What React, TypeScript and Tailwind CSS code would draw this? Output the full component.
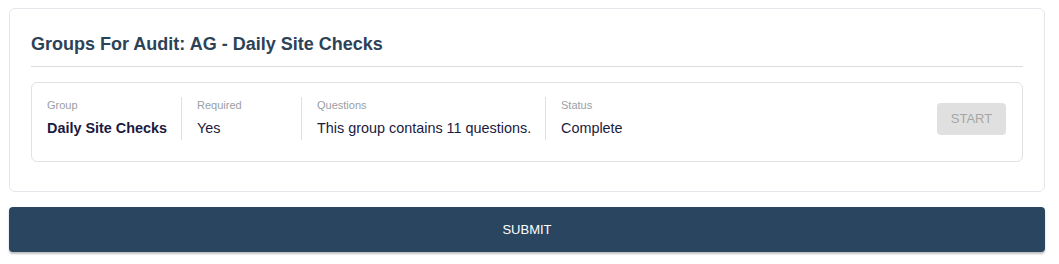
const columns = [
  { label: 'Group', value: 'Daily Site Checks', bold: true, width: 'w-[134px]' },
  { label: 'Required', value: 'Yes', width: 'w-[120px]' },
  { label: 'Questions', value: 'This group contains 11 questions.', width: 'w-[244px]' },
  { label: 'Status', value: 'Complete', width: 'w-[150px]' },
];

export default function App() {
  return (
    <div className="min-h-screen bg-white font-['Liberation_Sans',Arial,sans-serif]">
      <div className="ml-[9px] w-[1036px] pt-[8px]">
        <section className="rounded-md border border-[#e3e7ec] bg-white px-[21px] pb-[29px] pt-[23px]">
          <h2 className="text-[18px] font-bold leading-[24px] text-[#2c4257]">
            Groups For Audit: AG - Daily Site Checks
          </h2>
          <div className="mt-[10px] h-px bg-[#dcdcdc]" />
          <div className="mt-[15px] flex items-center rounded-md border border-[#e2e2e2] px-[15px] pb-[21px] pt-[14px]">
            {columns.map((col, i) => (
              <div
                key={col.label}
                className={`flex h-[43px] shrink-0 flex-col whitespace-nowrap ${col.width} ${
                  i === 0 ? 'pr-[15px]' : 'border-l border-[#e0e0e0] px-[15px]'
                }`}
              >
                <span className="mt-[2px] text-[11px] leading-[13px] text-[#9a9ea3]">{col.label}</span>
                <span
                  className={`mt-[8px] text-[14.4px] leading-[17px] text-[#1b1a40] ${
                    col.bold ? 'font-bold' : ''
                  }`}
                >
                  {col.value}
                </span>
              </div>
            ))}
            <div className="flex-1" />
            <button
              disabled
              className="mr-[1px] h-[32px] w-[69px] rounded bg-[#e0e0e0] text-[13px] text-[#a6a6a6]"
            >
              START
            </button>
          </div>
        </section>
        <button className="mt-[15px] flex h-[45px] w-full items-center justify-center rounded bg-[#2a4560] text-[13px] text-white shadow-[0_2px_2px_rgba(0,0,0,0.25)]">
          SUBMIT
        </button>
      </div>
    </div>
  );
}
